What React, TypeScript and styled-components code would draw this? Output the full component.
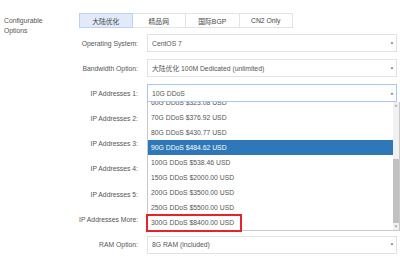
import React from 'react';
import styled, { createGlobalStyle } from 'styled-components';

const GlobalStyle = createGlobalStyle`
    html,
    body {
        margin: 0;
        padding: 0;
        background: #fff;
    }
    body {
        font-family: 'Liberation Sans', 'Noto Sans CJK SC', Arial, sans-serif;
        font-size: 6.8px;
        color: #555;
    }
`;

const TABS = ['大陆优化', '精品网', '国际BGP', 'CN2 Only'];

const DDOS_OPTIONS = [
    '10G DDoS',
    '20G DDoS $107.69 USD',
    '30G DDoS $161.54 USD',
    '40G DDoS $215.38 USD',
    '50G DDoS $269.23 USD',
    '60G DDoS $323.08 USD',
    '70G DDoS $376.92 USD',
    '80G DDoS $430.77 USD',
    '90G DDoS $484.62 USD',
    '100G DDoS $538.46 USD',
    '150G DDoS $2000.00 USD',
    '200G DDoS $3500.00 USD',
    '250G DDoS $5500.00 USD',
    '300G DDoS $8400.00 USD',
];

const HOVERED = '90G DDoS $484.62 USD';
const MARKED = '300G DDoS $8400.00 USD';

// rows under the open list keep their value hidden behind it
type FieldRow = { label: string; value?: string; open?: boolean };

const ROWS: FieldRow[] = [
    { label: 'Operating System:', value: 'CentOS 7' },
    { label: 'Bandwidth Option:', value: '大陆优化 100M Dedicated (unlimited)' },
    { label: 'IP Addresses 1:', value: '10G DDoS', open: true },
    { label: 'IP Addresses 2:' },
    { label: 'IP Addresses 3:' },
    { label: 'IP Addresses 4:' },
    { label: 'IP Addresses 5:' },
    { label: 'IP Addresses More:' },
    { label: 'RAM Option:', value: '8G RAM (included)' },
];

const Triangle: React.FC<{ up?: boolean; color?: string }> = ({ up, color = '#6a6a6a' }) => (
    <svg width="4" height="3" viewBox="0 0 4 3">
        <polygon points={up ? '0.5,2.5 3.5,2.5 2,0.5' : '0.5,0.5 3.5,0.5 2,2.5'} fill={color} />
    </svg>
);

const Dropdown: React.FC = () => (
    <DropdownPanel>
        <OptionList>
            {DDOS_OPTIONS.map((option) => (
                <Option key={option} $selected={option === HOVERED}>
                    {option}
                </Option>
            ))}
        </OptionList>
        <ScrollBar>
            <ScrollArrow>
                <Triangle up color="#9a9a9a" />
            </ScrollArrow>
            <ScrollTrack>
                <ScrollThumb />
            </ScrollTrack>
            <ScrollArrow>
                <Triangle color="#9a9a9a" />
            </ScrollArrow>
        </ScrollBar>
        {DDOS_OPTIONS[DDOS_OPTIONS.length - 1] === MARKED && <Marker />}
    </DropdownPanel>
);

const App: React.FC = () => (
    <>
        <GlobalStyle />
        <Page>
            <SectionTitle>
                Configurable
                <br />
                Options
            </SectionTitle>
            <Content>
                <Tabs>
                    {TABS.map((tab, i) => (
                        <Tab key={tab} $active={i === 0}>
                            {tab}
                        </Tab>
                    ))}
                </Tabs>
                <Form>
                    {ROWS.map((row) => (
                        <Row key={row.label}>
                            <Label>{row.label}</Label>
                            <Select $focused={!!row.open}>
                                {row.value && <Value>{row.value}</Value>}
                                <Caret>
                                    <Triangle up={row.open} />
                                </Caret>
                                {row.open && <Dropdown />}
                            </Select>
                        </Row>
                    ))}
                </Form>
            </Content>
        </Page>
    </>
);

const Page = styled.div`
    display: flex;
    padding: 13px 3px 0 4px;
`;

const SectionTitle = styled.div`
    width: 75px;
    padding-top: 3px;
    line-height: 10px;
    color: #555;
`;

const Content = styled.div`
    flex: 1;
    display: flex;
    flex-direction: column;
`;

const Tabs = styled.div`
    display: flex;
`;

const Tab = styled.div<{ $active: boolean }>`
    box-sizing: border-box;
    width: 53.5px;
    height: 15px;
    display: flex;
    align-items: center;
    justify-content: center;
    color: #444;
    background: ${(props) => (props.$active ? '#e1eaf8' : '#fff')};
    border: 1px solid ${(props) => (props.$active ? '#bfd1ef' : '#e3e3e3')};
    & + & {
        border-left: none;
    }
`;

const Form = styled.div`
    margin-top: 6px;
    display: flex;
    flex-direction: column;
    gap: 7.2px;
`;

const Row = styled.div`
    display: grid;
    grid-template-columns: 68px 1fr;
    align-items: center;
`;

const Label = styled.div`
    text-align: right;
    padding-right: 9px;
    white-space: nowrap;
    color: #555;
`;

const Select = styled.div<{ $focused: boolean }>`
    position: relative;
    box-sizing: border-box;
    height: 18px;
    display: flex;
    align-items: center;
    padding: 0 2px 0 4px;
    background: #fff;
    border: 1px solid ${(props) => (props.$focused ? '#a8c7f0' : '#e2e2e2')};
`;

const Value = styled.span`
    white-space: nowrap;
    color: #555;
`;

const Caret = styled.span`
    margin-left: auto;
    display: flex;
`;

const DropdownPanel = styled.div`
    position: absolute;
    z-index: 2;
    top: calc(100% + 1px);
    left: -1px;
    right: -4px;
    height: 128px;
    display: flex;
    background: #fff;
    border: 1px solid #c9c9c9;
    border-top: none;
`;

const OptionList = styled.div`
    flex: 1;
    display: flex;
    flex-direction: column;
    justify-content: flex-end;
    overflow: hidden;
`;

const Option = styled.div<{ $selected: boolean }>`
    flex-shrink: 0;
    height: 15px;
    line-height: 15px;
    padding-left: 3px;
    white-space: nowrap;
    color: ${(props) => (props.$selected ? '#fff' : '#555')};
    background: ${(props) => (props.$selected ? '#2e78b9' : 'transparent')};
`;

const ScrollBar = styled.div`
    width: 6px;
    display: flex;
    flex-direction: column;
    background: #f1f1f1;
`;

const ScrollArrow = styled.div`
    height: 7px;
    display: flex;
    align-items: center;
    justify-content: center;
`;

const ScrollTrack = styled.div`
    flex: 1;
    display: flex;
    flex-direction: column;
    justify-content: flex-end;
`;

const ScrollThumb = styled.div`
    height: 64px;
    background: #c1c1c1;
`;

const Marker = styled.div`
    position: absolute;
    left: -2px;
    bottom: -2px;
    width: 96px;
    height: 18px;
    box-sizing: border-box;
    border: 2px solid #e8222b;
`;

export default App;
